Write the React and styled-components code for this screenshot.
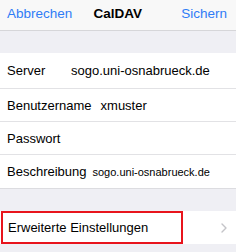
import React from "react";
import styled, { createGlobalStyle } from "styled-components";

const Global = createGlobalStyle`
  html, body { margin: 0; padding: 0; background: #efeff4; }
  body { font-family: "Liberation Sans", Arial, sans-serif; -webkit-font-smoothing: antialiased; }
`;

const Page = styled.div`
  width: 236px;
  height: 252px;
  background: #efeff4;
  display: flex;
  flex-direction: column;
  overflow: hidden;
`;

const NavBar = styled.div`
  height: 31px;
  box-sizing: border-box;
  background: #f8f8f8;
  border-bottom: 1px solid #d6d6d9;
  display: flex;
  align-items: center;
  justify-content: space-between;
  padding: 0 9px 4px 7px;
`;

const NavButton = styled.span`
  color: #2f7cf6;
  font-size: 13.5px;
`;

const NavTitle = styled.span`
  color: #000;
  font-size: 13.5px;
  font-weight: bold;
  margin-right: 18px;
`;

const Gap = styled.div`
  height: ${(p) => p.h}px;
`;

const Group = styled.div`
  background: #fff;
  display: flex;
  flex-direction: column;
  border-bottom: 1px solid #dcdce0;
`;

const Row = styled.div`
  height: ${(p) => p.h}px;
  display: flex;
  align-items: center;
  padding-left: 7px;
  & + & {
    border-top: 1px solid #e2e2e5;
  }
`;

const Label = styled.span`
  font-size: 13px;
  color: #000;
  min-width: ${(p) => p.w || 0}px;
  margin-right: ${(p) => p.gap || 0}px;
`;

const Value = styled.span`
  font-size: ${(p) => p.size || 13}px;
  color: #000;
`;

const LinkRow = styled.div`
  height: 33px;
  background: #fff;
  display: flex;
  align-items: center;
  justify-content: space-between;
  padding-right: 9px;
`;

const Highlight = styled.div`
  width: 182px;
  height: 33px;
  box-sizing: border-box;
  border: 2.5px solid #e8141c;
  display: flex;
  align-items: center;
  padding-left: 5px;
  margin-left: 1px;
  font-size: 13px;
  color: #000;
`;

const Chevron = () => (
  <svg width="6" height="10" viewBox="0 0 6 10">
    <path d="M1 1l4 4-4 4" fill="none" stroke="#c4c4c8" strokeWidth="1.4" strokeLinecap="round" strokeLinejoin="round" />
  </svg>
);

export default function App() {
  return (
    <Page>
      <Global />
      <NavBar>
        <NavButton>Abbrechen</NavButton>
        <NavTitle>CalDAV</NavTitle>
        <NavButton>Sichern</NavButton>
      </NavBar>
      <Gap h={22} />
      <Group>
        <Row h={35}>
          <Label w={64}>Server</Label>
          <Value>sogo.uni-osnabrueck.de</Value>
        </Row>
        <Row h={32}>
          <Label gap={9}>Benutzername</Label>
          <Value>xmuster</Value>
        </Row>
        <Row h={32}>
          <Label>Passwort</Label>
        </Row>
        <Row h={33}>
          <Label gap={6}>Beschreibung</Label>
          <Value size={11}>sogo.uni-osnabrueck.de</Value>
        </Row>
      </Group>
      <Gap h={22} />
      <LinkRow>
        <Highlight>Erweiterte Einstellungen</Highlight>
        <Chevron />
      </LinkRow>
    </Page>
  );
}
